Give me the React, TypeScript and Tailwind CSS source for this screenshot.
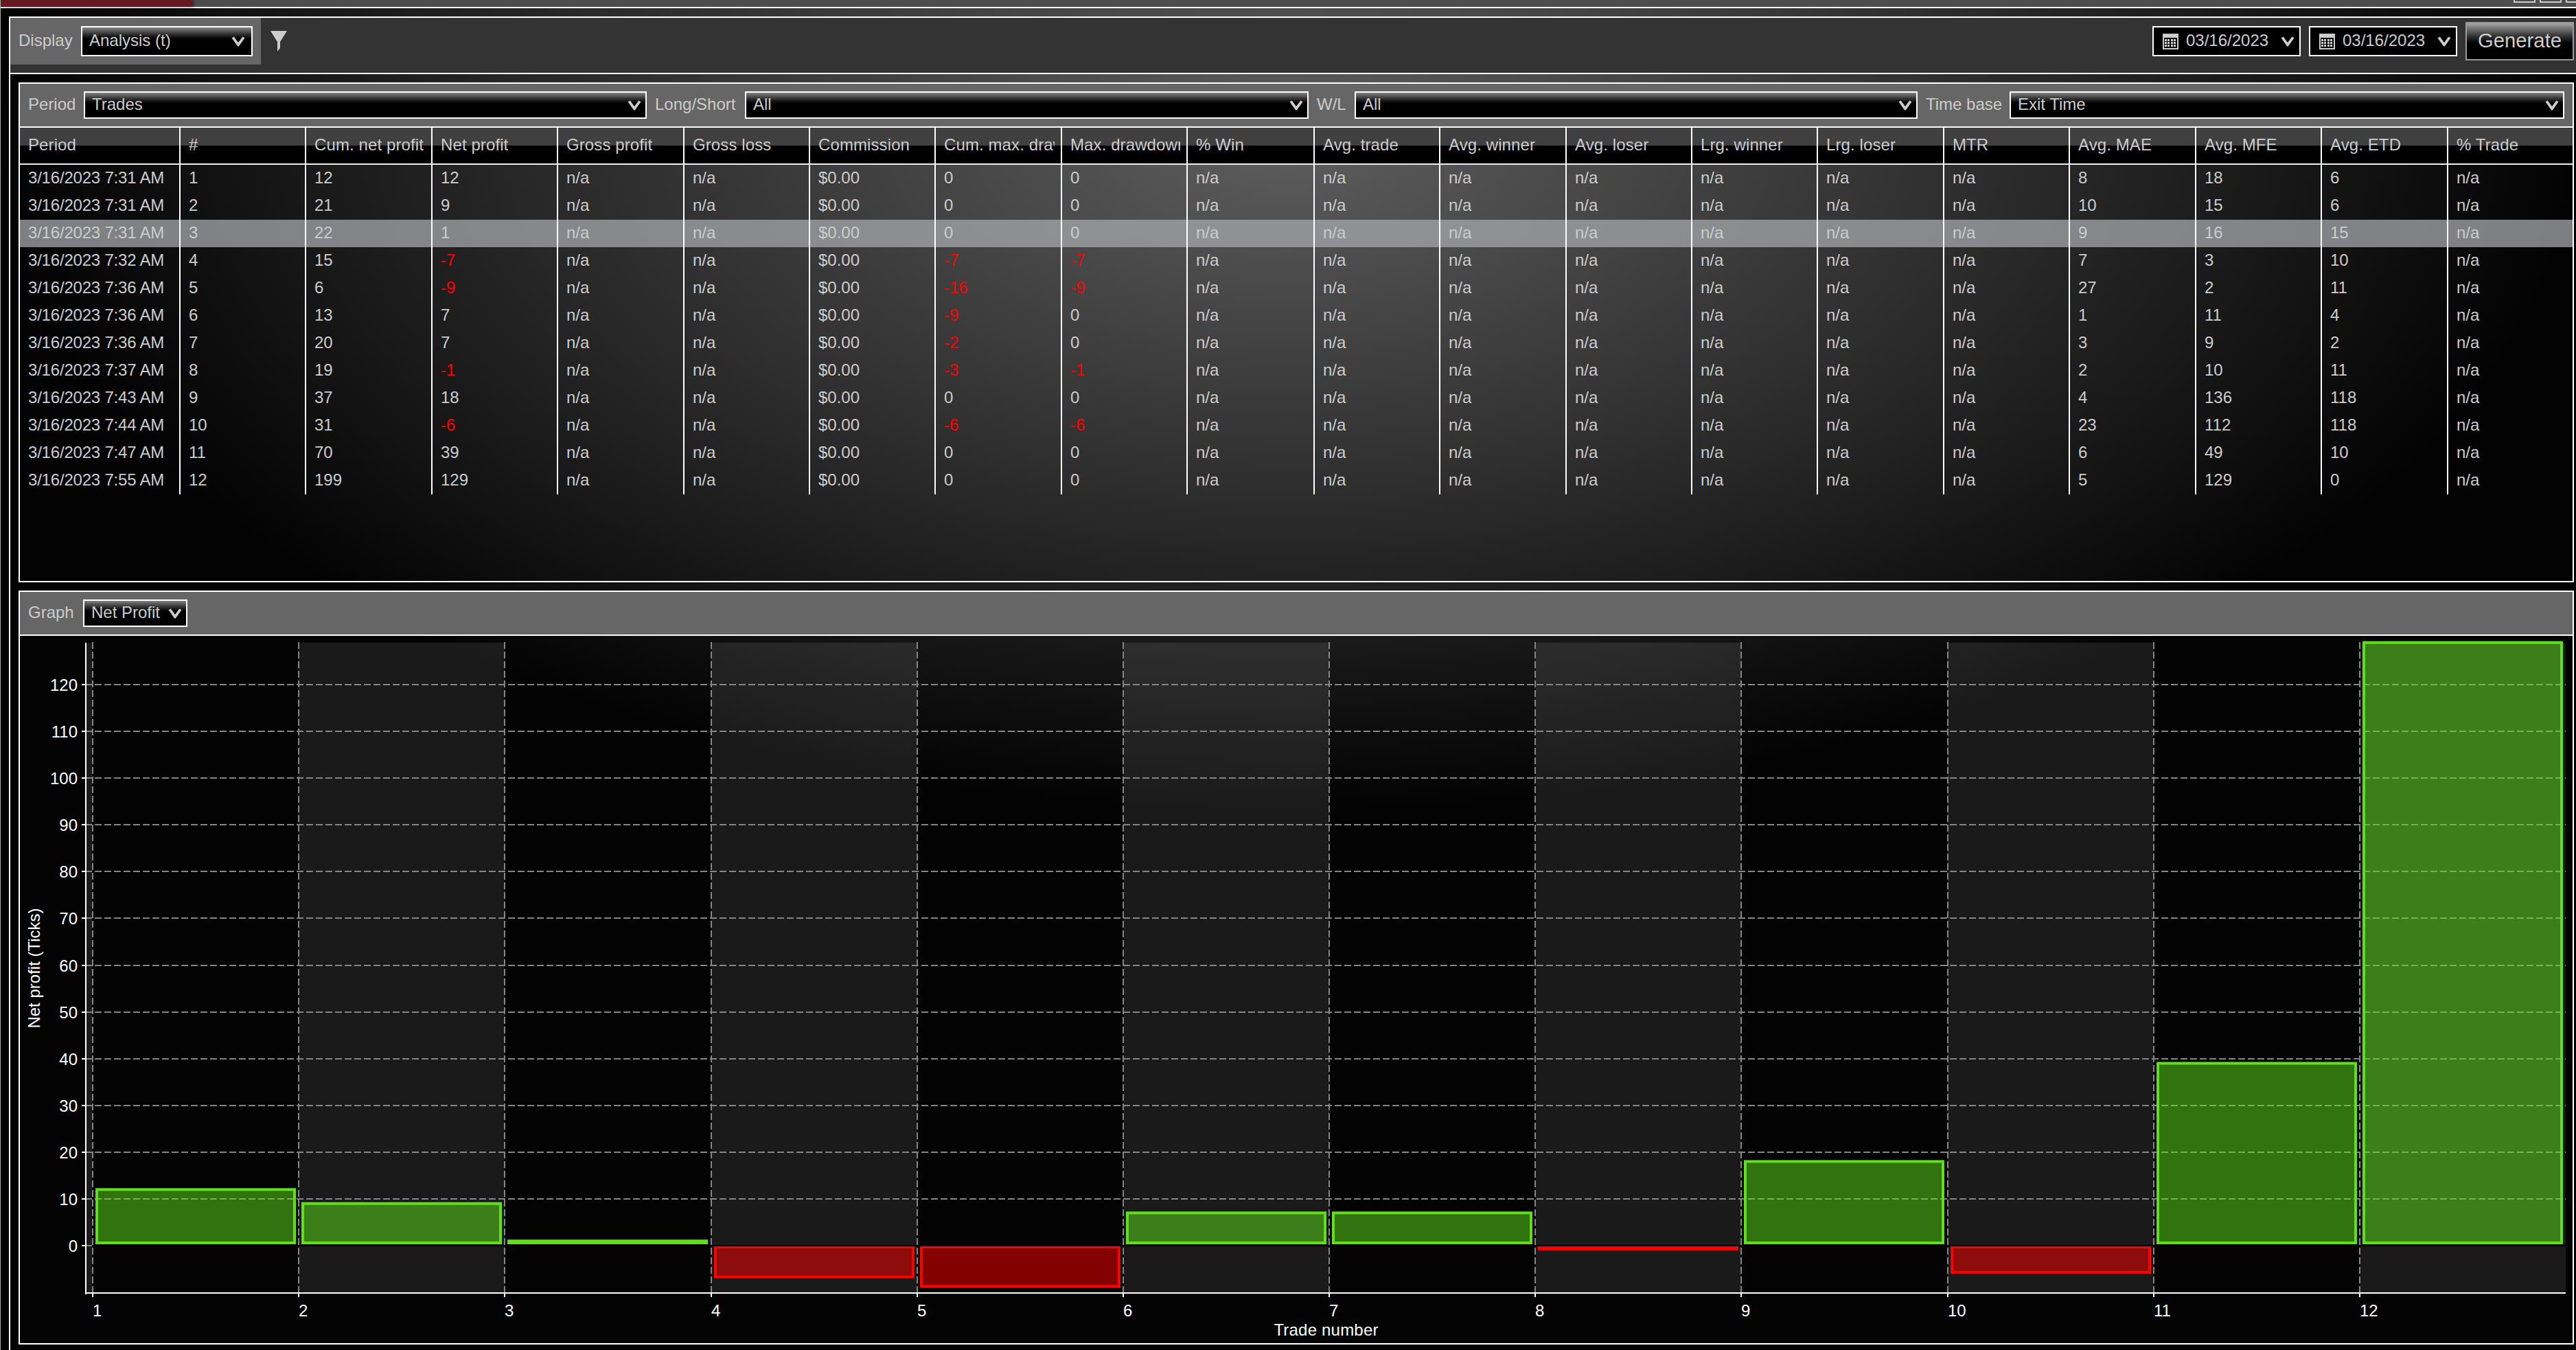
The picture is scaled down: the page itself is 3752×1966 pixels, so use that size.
import React from "react";

const COLUMNS = [
  "Period", "#", "Cum. net profit", "Net profit", "Gross profit", "Gross loss", "Commission",
  "Cum. max. drawdown", "Max. drawdown", "% Win", "Avg. trade", "Avg. winner", "Avg. loser",
  "Lrg. winner", "Lrg. loser", "MTR", "Avg. MAE", "Avg. MFE", "Avg. ETD", "% Trade",
];

const GRID =
  "grid grid-cols-[234px_183px_184px_183px_184px_183px_183px_184px_183px_185px_183px_184px_183px_183px_184px_183px_184px_183px_184px_181px]";

// time, cumulative, net, cum. max drawdown, max drawdown, MAE, MFE, ETD
const TRADES: [string, number, number, number, number, number, number, number][] = [
  ["7:31", 12, 12, 0, 0, 8, 18, 6],
  ["7:31", 21, 9, 0, 0, 10, 15, 6],
  ["7:31", 22, 1, 0, 0, 9, 16, 15],
  ["7:32", 15, -7, -7, -7, 7, 3, 10],
  ["7:36", 6, -9, -16, -9, 27, 2, 11],
  ["7:36", 13, 7, -9, 0, 1, 11, 4],
  ["7:36", 20, 7, -2, 0, 3, 9, 2],
  ["7:37", 19, -1, -3, -1, 2, 10, 11],
  ["7:43", 37, 18, 0, 0, 4, 136, 118],
  ["7:44", 31, -6, -6, -6, 23, 112, 118],
  ["7:47", 70, 39, 0, 0, 6, 49, 10],
  ["7:55", 199, 129, 0, 0, 5, 129, 0],
];

const SELECTED = 2;

function toCells(t: (typeof TRADES)[number], i: number): (string | number)[] {
  const [time, cum, net, cumDd, dd, mae, mfe, etd] = t;
  const na = "n/a";
  return [
    `3/16/2023 ${time} AM`, i + 1, cum, net, na, na, "$0.00", cumDd, dd,
    na, na, na, na, na, na, na, mae, mfe, etd, na,
  ];
}

function Chevron() {
  return (
    <svg width="20" height="15" viewBox="0 0 20 15" className="shrink-0">
      <path d="M0.5 2.2 L3.8 0.4 L10 9 L16.2 0.4 L19.5 2.2 L10.8 14.6 H9.2 Z" fill="#ccc" />
    </svg>
  );
}

function Select({ value, className }: { value: string; className: string }) {
  return (
    <div className={`flex items-center justify-between border-2 border-white bg-linear-to-b from-[#858585] to-black to-50% pl-[10px] ${className}`}>
      <span className="pb-[2px]">{value}</span>
      <Chevron />
    </div>
  );
}

function CalendarIcon() {
  return (
    <svg width="23" height="23" viewBox="0 0 23 23" shapeRendering="crispEdges">
      <path d="M0 0H23V23H0Z M2 6V21H21V6Z" fill="#ccc" fillRule="evenodd" />
      {[8, 12, 16].map((y) =>
        [3, 7, 12, 16].map((x) => <rect key={`${x}-${y}`} x={x} y={y} width="3" height="3" fill="#ccc" />)
      )}
    </svg>
  );
}

function DateBox() {
  return (
    <div className="flex h-[44px] w-[216px] items-center border-2 border-white bg-black pr-[7px] pl-[13px]">
      <CalendarIcon />
      <span className="ml-[11px] flex-1 pb-[2px]">03/16/2023</span>
      <Chevron />
    </div>
  );
}

function TradesTable() {
  return (
    <div>
      <div className={`${GRID} h-[54px] border-b-2 border-[#eee] bg-[linear-gradient(#404040_26px,#000_26px)] tracking-[0.1px]`}>
        {COLUMNS.map((c, i) => (
          <div key={c} className={`flex min-w-0 items-center pr-[9px] pb-[3px] pl-[12px] ${i < 19 ? "border-r-2 border-white" : ""}`}>
            <span className="overflow-hidden leading-[32px]">{c}</span>
          </div>
        ))}
      </div>
      {TRADES.map((t, i) => (
        <div key={i} className={`${GRID} h-[40px] ${i === SELECTED ? "bg-[rgba(164,165,169,0.77)]" : ""}`}>
          {toCells(t, i).map((v, c) => (
            <div
              key={c}
              className={`flex items-center pb-[3px] pl-[12px] ${c < 19 ? "border-r-2 border-white" : ""} ${c === 0 ? "tracking-[-0.2px]" : ""} ${
                typeof v === "number" && v < 0 ? "text-[#f00]" : ""
              }`}
            >
              {v}
            </div>
          ))}
        </div>
      ))}
    </div>
  );
}

// The svg starts at (29, 926) of the window; the helpers below work in window pixels.
const ZERO = 1814;
const PER_TICK = 6.808;
const STEP = 300.18;
const gridX = (i: number) => 135 + i * STEP;
const valueY = (v: number) => ZERO - v * PER_TICK;

function Chart() {
  const levels = Array.from({ length: 13 }, (_, i) => i * 10);
  return (
    <svg width="3718" height="1030" viewBox="29 926 3718 1030" className="block">
      <rect x="126" y="936" width="8" height="946" fill="#fff" fillOpacity="0.095" />
      {[1, 3, 5, 7, 9, 11].map((i) => (
        <rect key={i} x={gridX(i)} y="936" width={STEP} height="946" fill="#fff" fillOpacity="0.095" />
      ))}

      {levels.map((v) => (
        <g key={v}>
          <line x1="124" x2="3737" y1={Math.round(valueY(v))} y2={Math.round(valueY(v))} stroke="#858585" strokeWidth="2" strokeDasharray="10 4" />
          <line x1="119" x2="125" y1={Math.round(valueY(v))} y2={Math.round(valueY(v))} stroke="#fff" strokeWidth="2" />
          <text x="113" y={Math.round(valueY(v)) + 9} textAnchor="end" fill="#fff">{v}</text>
        </g>
      ))}
      {TRADES.map((_, i) => (
        <line key={i} x1={Math.round(gridX(i))} x2={Math.round(gridX(i))} y1="935" y2="1882" stroke="#858585" strokeWidth="2" strokeDasharray="10 4" />
      ))}

      {TRADES.map((t, i) => {
        const net = t[2];
        const y = net > 0 ? valueY(net) : ZERO + 2;
        const bottom = net > 0 ? ZERO - 4 : valueY(net) - 2;
        const color = net > 0 ? "#5fe01a" : "#ff0000";
        return (
          <rect key={i} x={Math.round(gridX(i)) + 6} y={y} width="288" height={bottom - y} fill={color} fillOpacity="0.51" stroke={color} strokeWidth="4" />
        );
      })}
      <line x1="135" x2="3737" y1={ZERO} y2={ZERO} stroke="#000" strokeWidth="2" />

      <rect x="124" y="936" width="2" height="949" fill="#fff" />
      <rect x="124" y="1882" width="3613" height="2" fill="#fff" />
      {TRADES.map((_, i) => (
        <g key={i}>
          <rect x={Math.round(gridX(i)) - 1} y="1884" width="2" height="5" fill="#fff" />
          <text x={Math.round(gridX(i))} y="1917" fill="#fff">{i + 1}</text>
        </g>
      ))}
      <text x="1931.5" y="1945" textAnchor="middle" fill="#fff" className="tracking-[0.2px]">Trade number</text>
      <text transform="translate(58 1410) rotate(-90)" textAnchor="middle" fill="#fff">Net profit (Ticks)</text>
    </svg>
  );
}

export default function App() {
  return (
    <div className="flex h-[1966px] w-[3752px] flex-col overflow-hidden border-l border-[#aaa] bg-[radial-gradient(50%_50%_at_50%_10%,#5e5e5e,#030303)] font-['Liberation_Sans',Arial,sans-serif] text-[24px] leading-[28px] whitespace-nowrap text-[#ccc]">
      {/* Title bar */}
      <div className="flex h-[12px] shrink-0 justify-between border-b-2 border-white bg-[#4d4d4d]">
        <div className="h-full w-[278px] bg-[#651820] shadow-[3px_0_4px_rgba(0,0,0,0.5)]" />
        <div className="-mr-[17px] flex gap-[6px]">
          <div className="h-[4px] w-[32px] border-2 border-t-0 border-[#ccc]" />
          <div className="h-[4px] w-[32px] border-2 border-t-0 border-[#ccc]" />
          <div className="h-[4px] w-[32px] border-2 border-t-0 border-[#ccc]" />
        </div>
      </div>

      <div className="mt-[12px] ml-[12px] flex flex-1 flex-col border-t-2 border-l-2 border-white">
        {/* Display toolbar */}
        <div className="flex h-[82px] shrink-0 justify-between border-b-2 border-white bg-[#333]">
          <div className="flex">
            <div className="flex h-[68px] w-[365px] items-center bg-[#666] pl-[12px]">
              <span className="w-[91px] pb-[2px]">Display</span>
              <Select value="Analysis (t)" className="h-[44px] w-[250px] pr-[9px]" />
            </div>
            <svg width="24" height="30" viewBox="0 0 24 30" className="mt-[19px] ml-[14px]">
              <path d="M0 0H24L14 16V25L10 30V16Z" fill="#ccc" />
            </svg>
          </div>
          <div className="flex h-[68px] items-center gap-[12px] pr-[3px]">
            <DateBox />
            <DateBox />
            <div className="flex h-[56px] w-[158px] items-center justify-center border-2 border-[#999] bg-linear-to-b from-[#a5a5a5] to-black to-65% pb-[2px] text-[29.3px]">
              Generate
            </div>
          </div>
        </div>

        {/* Trades */}
        <div className="mt-[12px] ml-[12px] h-[728px] w-[3722px] shrink-0 border-2 border-white">
          <div className="flex h-[64px] items-center border-b-2 border-white bg-[#666] pl-[12px]">
            <span className="w-[81px] pb-[2px]">Period</span>
            <Select value="Trades" className="h-[40px] w-[820px] pr-[6px]" />
            <span className="ml-[12px] w-[131px] pb-[2px]">Long/Short</span>
            <Select value="All" className="h-[40px] w-[821px] pr-[6px]" />
            <span className="ml-[12px] w-[55px] pb-[2px]">W/L</span>
            <Select value="All" className="h-[40px] w-[820px] pr-[6px]" />
            <span className="ml-[12px] w-[122px] pb-[2px]">Time base</span>
            <Select value="Exit Time" className="h-[40px] w-[808px] pr-[6px]" />
          </div>
          <TradesTable />
        </div>

        {/* Graph */}
        <div className="mt-[12px] ml-[12px] h-[1098px] w-[3722px] shrink-0 border-2 border-white">
          <div className="flex h-[64px] items-center border-b-2 border-white bg-[#666] pl-[12px]">
            <span className="w-[80px] pb-[2px]">Graph</span>
            <Select value="Net Profit" className="h-[40px] w-[152px] pr-[6px]" />
          </div>
          <Chart />
        </div>
      </div>
    </div>
  );
}
